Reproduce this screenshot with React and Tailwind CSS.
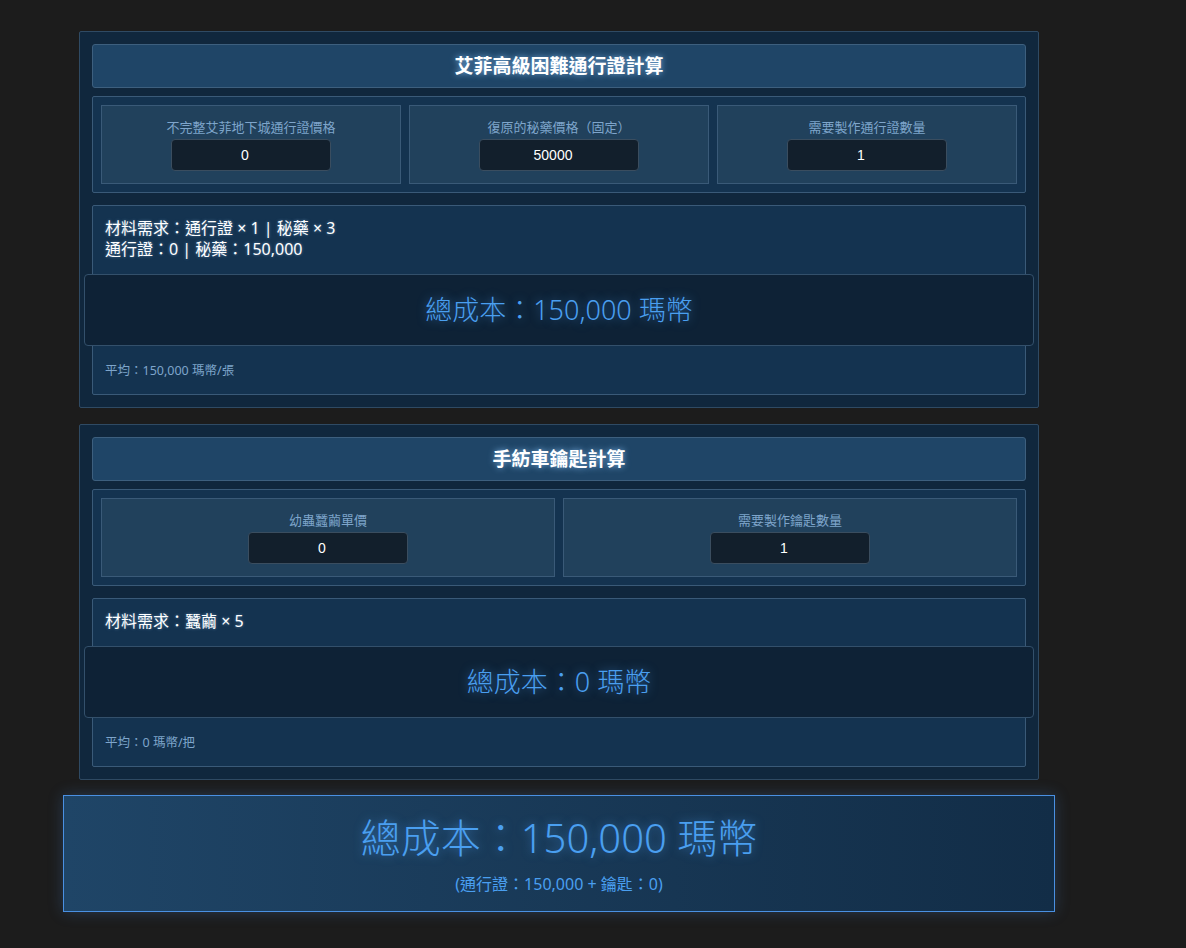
import React from "react";

const FONT = { fontFamily: '"Noto Sans", "Noto Sans CJK TC", sans-serif' };
const glowTitle = { textShadow: "0 0 6px rgba(140,200,255,0.8)" };
const glowBlue = { textShadow: "0 0 10px rgba(74,159,240,0.55)" };

function Field({ label, value }) {
  return (
    <div className="flex-1 flex flex-col items-center border border-[#3a5a78] bg-[#21415c] pt-[12px] pb-[12px]">
      <div className="text-[13px] leading-[18px] text-[#7ea5cb]">{label}</div>
      <div
        className="mt-[3px] w-[160px] h-[32px] flex items-center justify-center rounded-[4px] border border-[#3a4d5f] bg-[#121f2c] pr-[12px] text-[14px] text-white"
        style={{ fontFamily: '"Liberation Sans", Arial, sans-serif' }}
      >
        {value}
      </div>
    </div>
  );
}

function Card({ title, fields, lines, total, avg }) {
  return (
    <div className="w-[960px] mx-auto border border-[#2f4a63] rounded-[2px] bg-[#10273d] p-[12px]">
      <div className="h-[44px] flex items-center justify-center rounded-[3px] border border-[#3d5f7e] bg-[#1f4567]">
        <span className="text-[19px] font-bold text-white" style={glowTitle}>{title}</span>
      </div>
      <div className="mt-[8px] flex gap-[8px] rounded-[2px] border border-[#3a5a78] bg-[#143350] p-[8px]">
        {fields.map((f) => (
          <Field key={f.label} label={f.label} value={f.value} />
        ))}
      </div>
      <div className="mt-[12px] rounded-[2px] border border-[#3a5a78] bg-[#143350] pt-[12px] pb-[15px]">
        <div className="px-[12px] text-[16px] leading-[21px] text-white" style={{ textShadow: "0 0 3px rgba(160,210,255,0.5)" }}>
          {lines.map((l) => (
            <div key={l}>{l}</div>
          ))}
        </div>
        <div className="mt-[14px] mx-[-9px] h-[72px] flex items-center justify-center rounded-[4px] border border-[#33506b] bg-[#0e2236]">
          <span className="text-[27px] font-light text-[#4a9ff0]" style={glowBlue}>{total}</span>
        </div>
        <div className="mt-[16px] px-[12px] text-[12.5px] leading-[17px] text-[#7ea5cb]">{avg}</div>
      </div>
    </div>
  );
}

export default function App() {
  return (
    <div className="min-h-[948px] bg-[#1c1c1c] pt-[31px] pl-[63px]" style={FONT}>
      <div className="w-[992px] flex flex-col">
        <Card
          title="艾菲高級困難通行證計算"
          fields={[
            { label: "不完整艾菲地下城通行證價格", value: "0" },
            { label: "復原的秘藥價格（固定）", value: "50000" },
            { label: "需要製作通行證數量", value: "1" },
          ]}
          lines={["材料需求：通行證 × 1 | 秘藥 × 3", "通行證：0 | 秘藥：150,000"]}
          total="總成本：150,000 瑪幣"
          avg="平均：150,000 瑪幣/張"
        />
        <div className="h-[16px]" />
        <Card
          title="手紡車鑰匙計算"
          fields={[
            { label: "幼蟲蠶繭單價", value: "0" },
            { label: "需要製作鑰匙數量", value: "1" },
          ]}
          lines={["材料需求：蠶繭 × 5"]}
          total="總成本：0 瑪幣"
          avg="平均：0 瑪幣/把"
        />
        <div
          className="mt-[15px] h-[117px] flex flex-col items-center border border-[#4a90e2] bg-gradient-to-r from-[#1f4567] to-[#122d47] pt-[18px]"
          style={{ boxShadow: "0 0 14px rgba(74,144,226,0.25)" }}
        >
          <div className="text-[40px] leading-[48px] font-light text-[#4a9ff0]" style={glowBlue}>總成本：150,000 瑪幣</div>
          <div className="mt-[11px] text-[16px] leading-[22px] text-[#4a9ff0]">(通行證：150,000 + 鑰匙：0)</div>
        </div>
      </div>
    </div>
  );
}
